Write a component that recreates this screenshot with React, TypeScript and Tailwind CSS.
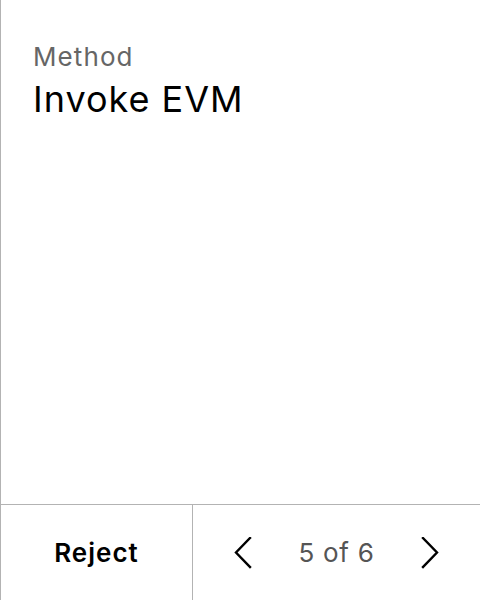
import React from 'react';

const Chevron = ({ dir }: { dir: 'left' | 'right' }) => (
  <svg width="20" height="32" viewBox="0 0 20 32" fill="none" stroke="#000" strokeWidth="2.4" strokeLinecap="square">
    {dir === 'left' ? <path d="M17 1 L3 15.5 L17 30" /> : <path d="M3 1 L17 15.5 L3 30" />}
  </svg>
);

export default function App() {
  return (
    <div
      className="w-[480px] h-[600px] flex flex-col bg-white border-l border-[#b3b3b3]"
      style={{ fontFamily: 'Inter, "Noto Sans", sans-serif' }}
    >
      <div className="flex-1 pt-[41px] pl-[32px]">
        <div className="text-[26px] leading-[32px] tracking-[1.1px] text-[#666]">Method</div>
        <div className="text-[36px] leading-[40px] tracking-[1px] text-black mt-[6px]">Invoke EVM</div>
      </div>
      <div className="h-[96px] flex border-t border-[#b3b3b3]">
        <button className="w-[191px] flex items-center justify-center text-[26px] tracking-[1px] font-semibold text-black">
          Reject
        </button>
        <div className="flex-1 flex items-center justify-center gap-[46px] border-l border-[#b3b3b3]">
          <Chevron dir="left" />
          <span className="text-[26px] tracking-[0.7px] text-[#555]">5 of 6</span>
          <Chevron dir="right" />
        </div>
      </div>
    </div>
  );
}
